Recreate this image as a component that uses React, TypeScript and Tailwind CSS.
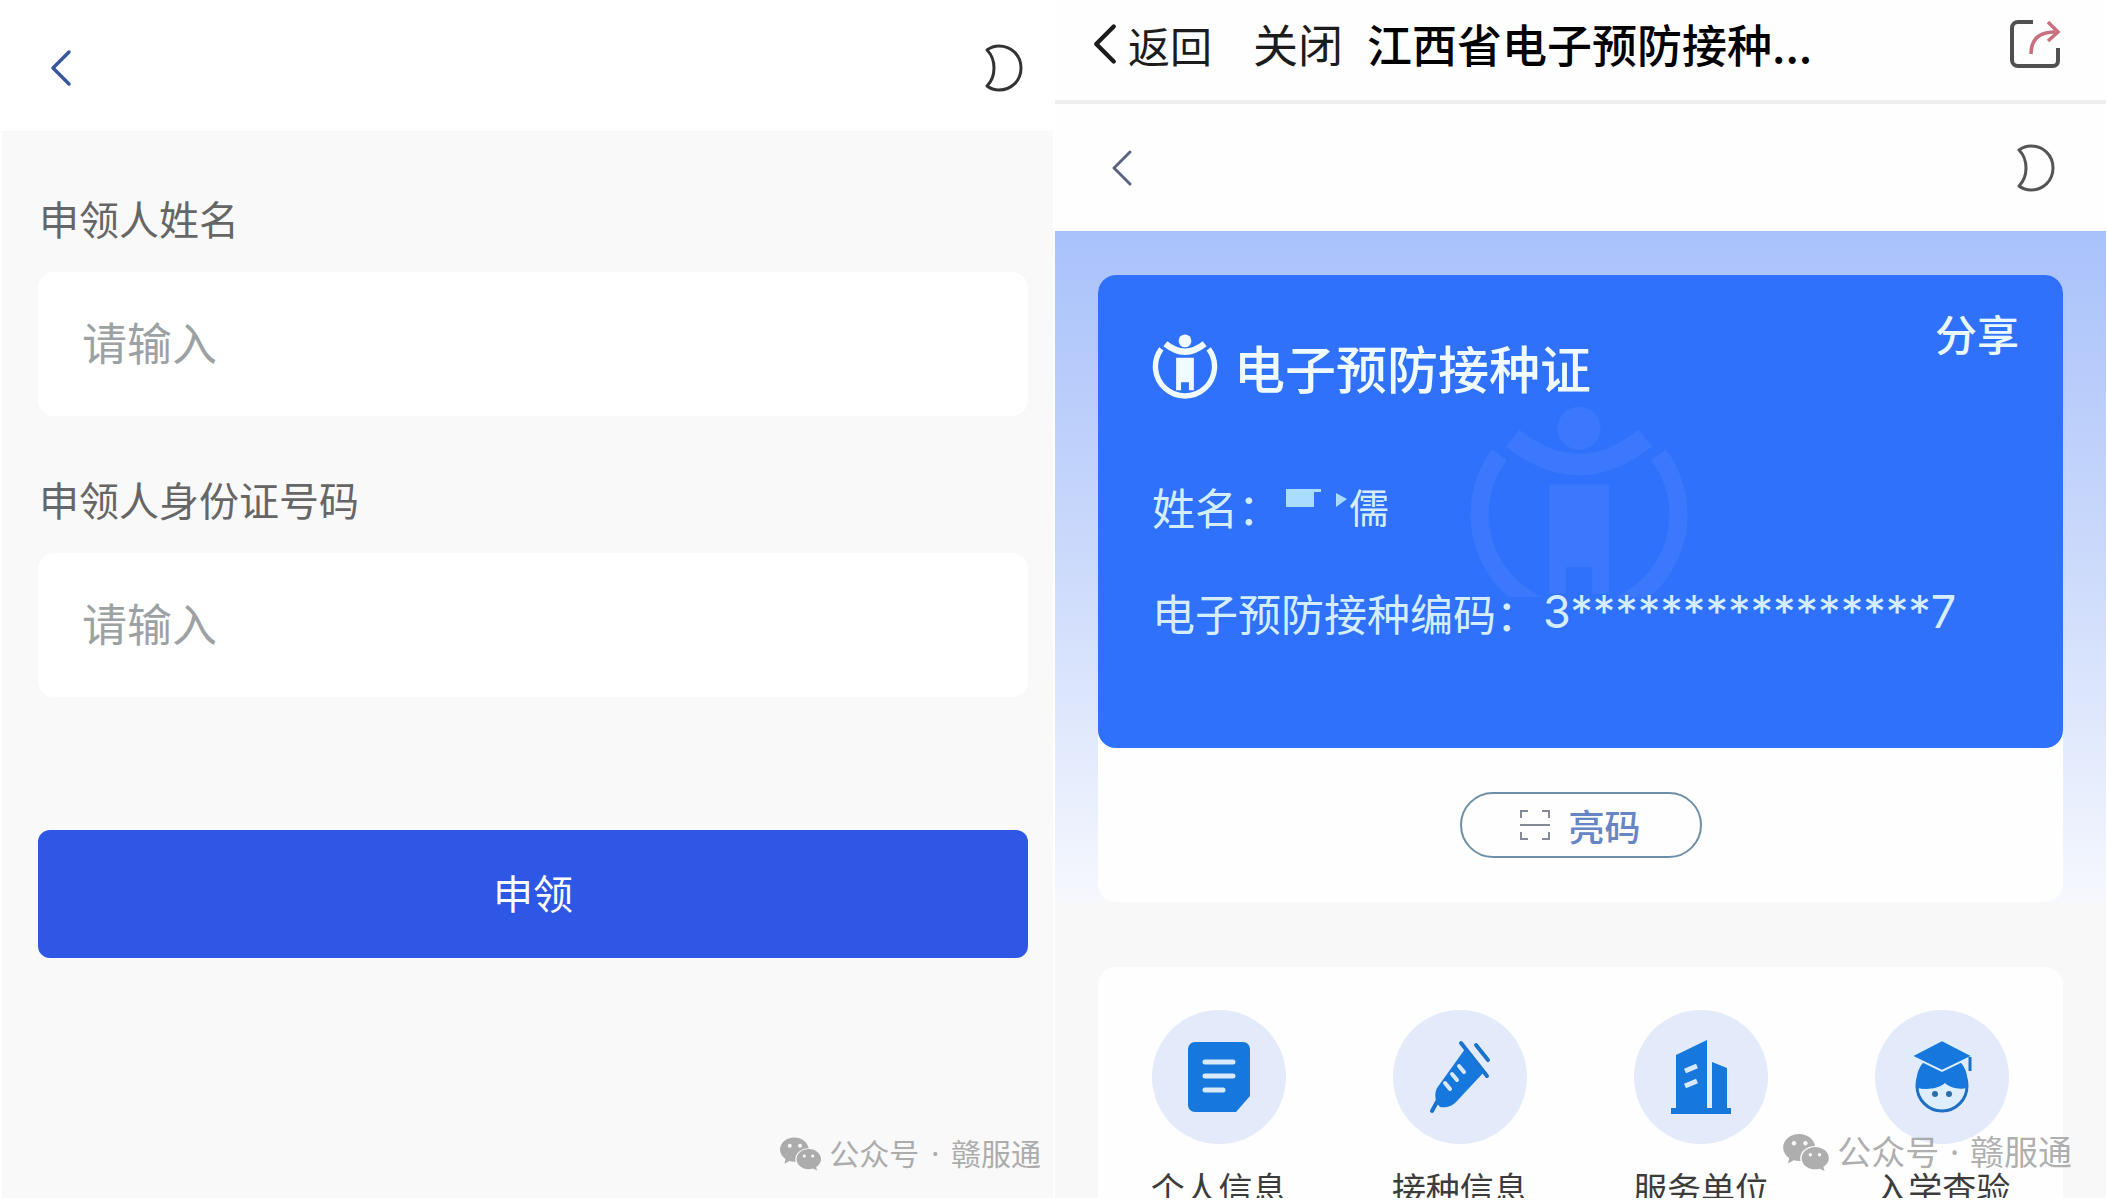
import type { ReactNode } from "react";

function Chevron({ className, stroke }: { className: string; stroke: number }) {
  return (
    <svg viewBox="0 0 22 38" className={className} fill="none" stroke="currentColor" strokeWidth={stroke} strokeLinecap="round" strokeLinejoin="round" aria-hidden="true">
      <path d="M19 3 3 19l16 16" />
    </svg>
  );
}

function Moon({ className }: { className: string }) {
  return (
    <svg viewBox="0 0 40 50" className={className} fill="none" stroke="currentColor" strokeLinejoin="round" aria-hidden="true">
      <path d="M3 7C7 4 11 3 15 3c12 0 22 9 22 22S27 47 15 47c-4 0-8-1-12-4 5-5 7-11 7-18S8 12 3 7Z" />
    </svg>
  );
}

function ShareIcon() {
  return (
    <svg viewBox="0 0 52 52" className="size-[52px]" fill="none" aria-hidden="true">
      <path d="M24 4H9a6 6 0 0 0-6 6v32a6 6 0 0 0 6 6h35a5 5 0 0 0 5-5V30" stroke="#505050" strokeWidth="4" />
      <path d="M22 36c0-14 7-22 24-22" stroke="#c9707f" strokeWidth="3.5" />
      <path d="m39 4 10 10-10 9" stroke="#c9707f" strokeWidth="3.5" />
    </svg>
  );
}

function Emblem({ className }: { className: string }) {
  return (
    <svg viewBox="0 0 66 67" className={className} fill="none" stroke="currentColor" aria-hidden="true">
      <circle cx="33" cy="7" r="6.5" fill="currentColor" stroke="none" />
      <path d="M24 24h18v33h-5v-8h-8v8h-5Z" fill="currentColor" stroke="none" />
      <path d="M13 10Q33 26 53 10" strokeWidth="6.5" />
      <path d="M9 15A30 30 0 1 0 57 15" strokeWidth="5.5" />
    </svg>
  );
}

function ScanIcon() {
  return (
    <svg viewBox="0 0 30 32" className="h-8 w-[30px] text-[#858b96]" fill="none" stroke="currentColor" strokeWidth="2" aria-hidden="true">
      <path d="M1 9V2h7M22 2h7v7M29 23v7h-7M8 30H1v-7M0 16h30" />
    </svg>
  );
}

function WeChat({ className }: { className: string }) {
  return (
    <svg viewBox="0 0 42 34" className={className} aria-hidden="true">
      <path fill="currentColor" d="M15 0C6.500 0 0 5.500 0 12.500c0 4 2.200 7.400 5.600 9.700L4.500 27l5.200-2.800c1.900.5 3.900.8 6.300.7-2-7.300 4.500-13.900 13.500-13.900C28 4.600 22 0 15 0Z" />
      <path fill="currentColor" d="M29.500 12C22.600 12 17 16.600 17 22.300s5.600 10.200 12.500 10.200c1.500 0 3-.2 4.300-.6L38 34l-1-3.800c3.100-1.900 5-4.700 5-7.900C42 16.600 36.400 12 29.500 12Z" />
      <g className="fill-[#f9f9f9]">
        <circle cx="10" cy="8.500" r="2" />
        <circle cx="20.500" cy="8.500" r="2" />
        <circle cx="25" cy="19" r="1.600" />
        <circle cx="33.500" cy="19" r="1.600" />
      </g>
    </svg>
  );
}

function DocIcon() {
  return (
    <svg viewBox="0 0 62 70" className="h-[70px] w-[62px]" aria-hidden="true">
      <path fill="#1677dc" d="M7 0h48a7 7 0 0 1 7 7v47L48 70H7a7 7 0 0 1-7-7V7a7 7 0 0 1 7-7Z" />
      <path stroke="#d9e9fc" strokeWidth="5" strokeLinecap="round" d="M17 20h28M17 34h28M17 48h18" />
    </svg>
  );
}

function SyringeIcon() {
  return (
    <svg viewBox="0 0 62 74" className="h-[74px] w-[62px]" aria-hidden="true">
      <g fill="none" stroke="#1a72cc" strokeWidth="4" strokeLinecap="round">
        <path d="M32 3 58 36M47 5l12 15" />
        <path strokeWidth="4" d="m3 71 6-11" />
      </g>
      <path fill="#1677dc" d="M36 9 55 32 28 61c-5 6-12 7-17 6-5-5-6-13-3-19Z" />
      <path fill="none" stroke="#d9e9fc" strokeWidth="4" strokeLinecap="round" d="m16 43 5 6M23 34l5 6M30 26l5 6" />
    </svg>
  );
}

function BuildingIcon() {
  return (
    <svg viewBox="0 0 60 74" className="h-[74px] w-[60px]" aria-hidden="true">
      <path fill="#1677dc" d="M5 15 36 0v68h5V22l15 6v40h4v6H0v-6h5Z" />
      <path stroke="#d9e9fc" strokeWidth="5" d="m14 31 12-5M14 46l12-5" />
    </svg>
  );
}

function StudentIcon() {
  return (
    <svg viewBox="0 0 62 74" className="h-[74px] w-[62px]" aria-hidden="true">
      <circle cx="31" cy="46" r="25" fill="#dceeff" stroke="#1d70c4" strokeWidth="3" />
      <path fill="#1677dc" d="M6 48C4 36 8 27 12 23h38c4 4 8 13 6 25-9 2-18-1-22-5-7 6-18 7-28 5Z" />
      <path fill="#1677dc" stroke="#dceeff" strokeWidth="2" d="M31 0 62 16 31 31 0 16Z" />
      <path stroke="#1d70c4" strokeWidth="3" d="M59 17v14" />
      <circle cx="24" cy="54" r="3" fill="#2d6ea5" />
      <circle cx="38" cy="54" r="3" fill="#2d6ea5" />
    </svg>
  );
}

function Field({ id, label }: { id: string; label: string }) {
  return (
    <div className="flex flex-col gap-[26px]">
      <label htmlFor={id} className="px-px text-[40px] leading-[56px] text-[#666]">
        {label}
      </label>
      <input
        id={id}
        placeholder="请输入"
        className="h-[144px] w-full rounded-2xl bg-white px-11 pb-1.5 text-[45px] outline-none placeholder:text-[#9ca2a4]"
      />
    </div>
  );
}

function Service({ label, icon }: { label: string; icon: ReactNode }) {
  return (
    <button type="button" className="flex flex-col items-center gap-5">
      <span className="flex size-[134px] items-center justify-center rounded-full bg-[#e3eafa]">{icon}</span>
      <span className="text-[34px] leading-[48px] whitespace-nowrap text-[#3c3c3c]">{label}</span>
    </button>
  );
}

function ApplyScreen() {
  return (
    <section className="relative flex flex-col bg-[#f9f9f9]">
      <header className="flex h-[131px] shrink-0 items-center justify-between bg-white pt-1 pr-[29px] pl-12">
        <button type="button" aria-label="返回" className="text-[#36589c]">
          <Chevron className="h-[38px] w-[22px]" stroke={3.5} />
        </button>
        <button type="button" aria-label="夜间模式" className="text-[#333]">
          <Moon className="h-[50px] w-10 stroke-3" />
        </button>
      </header>
      <form className="flex flex-col pt-[59px] pr-[25px] pl-9">
        <div className="flex flex-col gap-[55px]">
          <Field id="name" label="申领人姓名" />
          <Field id="idno" label="申领人身份证号码" />
        </div>
        <button type="button" className="mt-[133px] h-32 rounded-xl bg-[#2e57e6] pb-1 text-[40px] text-white">
          申领
        </button>
      </form>
      <p className="absolute right-3 bottom-6 flex items-center gap-2 text-[30px] leading-10 text-[#acacac]">
        <WeChat className="h-[34px] w-[41px]" />
        <span className="font-['Noto_Sans','Noto_Sans_CJK_SC',sans-serif]">
          公众号 <span className="mx-1">·</span> 赣服通
        </span>
      </p>
    </section>
  );
}

function CertificateCard() {
  return (
    <div className="relative h-[473px] rounded-[18px] bg-[#3071fb] px-[54px] text-white">
      <div className="absolute top-[130px] left-[370px] h-48 overflow-hidden opacity-5">
        <Emblem className="size-[222px]" />
      </div>
      <button type="button" className="absolute top-[30px] right-11 text-[42px] leading-[56px] font-medium text-[#eaf8ff]">
        分享
      </button>
      <div className="relative flex flex-col pt-[58px] text-[43px] leading-[60px] text-[#d5eeff]">
        <h2 className="flex items-center gap-4 text-[51px] leading-[68px] font-medium text-[#f0fbff]">
          <Emblem className="size-[66px]" />
          电子预防接种证
        </h2>
        <p className="mt-[75px] flex items-center">
          姓名：
          <svg viewBox="0 0 68 44" className="h-11 w-[68px]" fill="#a9dcff" aria-hidden="true">
            <path d="M5 5h35v3h-7v15H5ZM55 9l11 6-11 8Z" />
          </svg>
          <span className="text-[40px]">儒</span>
        </p>
        <p className="mt-[46px] flex items-center whitespace-nowrap">
          电子预防接种编码：
          <span className="pl-1 font-[Inter] text-[45px]">3****************7</span>
        </p>
      </div>
    </div>
  );
}

function CertificateScreen() {
  return (
    <section className="relative flex flex-col overflow-hidden bg-[#f8f8f8]">
      <header className="flex h-[104px] shrink-0 items-center border-b-4 border-[#eeeeee] bg-[#fefefe] pr-[45px] pb-3 pl-[38px] whitespace-nowrap text-[#1c1c1c]">
        <button type="button" className="flex items-center gap-[11px] text-[42px]">
          <Chevron className="h-[42px] w-6" stroke={4} />
          返回
        </button>
        <button type="button" className="ml-[41px] text-[45px]">
          关闭
        </button>
        <h1 className="ml-6 flex-1 text-[45px] font-medium text-black">江西省电子预防接种...</h1>
        <button type="button" aria-label="分享">
          <ShareIcon />
        </button>
      </header>
      <div className="flex h-[127px] shrink-0 items-center justify-between bg-[#fefefe] pr-[50px] pl-14">
        <button type="button" aria-label="返回" className="text-[#5d6280]">
          <Chevron className="h-[38px] w-[22px]" stroke={3} />
        </button>
        <button type="button" aria-label="夜间模式" className="text-[#555]">
          <Moon className="h-[50px] w-10 stroke-3" />
        </button>
      </div>
      <div className="shrink-0 bg-linear-to-b from-[#a9c2fb] via-[#ccdafb] to-[#f6f8fd] px-[43px] pt-11">
        <div className="rounded-[18px] bg-[#fefefe]">
          <CertificateCard />
          <div className="flex justify-center pt-[44px] pb-11">
            <button type="button" className="flex h-[66px] w-[242px] items-center justify-center gap-[18px] rounded-full border-2 border-[#6d8fa8] text-[36px] font-medium text-[#6585c4]">
              <ScanIcon />
              亮码
            </button>
          </div>
        </div>
      </div>
      <nav className="mx-[43px] mt-[65px] grid shrink-0 grid-cols-4 rounded-t-[18px] bg-[#fefefe] pt-[43px]">
        <Service label="个人信息" icon={<DocIcon />} />
        <Service label="接种信息" icon={<SyringeIcon />} />
        <Service label="服务单位" icon={<BuildingIcon />} />
        <Service label="入学查验" icon={<StudentIcon />} />
      </nav>
      <p className="absolute right-[34px] bottom-[22px] flex items-center gap-2 text-[34px] leading-[48px] text-[#8c8c8c]/70">
        <WeChat className="h-[37px] w-[46px]" />
        <span className="font-['Noto_Sans','Noto_Sans_CJK_SC',sans-serif]">
          公众号 <span className="mx-0.5">·</span> 赣服通
        </span>
      </p>
    </section>
  );
}

export default function App() {
  return (
    <main className="grid h-screen grid-cols-2 gap-[2px] overflow-hidden bg-white pr-px pb-[2px] pl-[2px] font-['Noto_Sans_CJK_SC',sans-serif]">
      <ApplyScreen />
      <CertificateScreen />
    </main>
  );
}
